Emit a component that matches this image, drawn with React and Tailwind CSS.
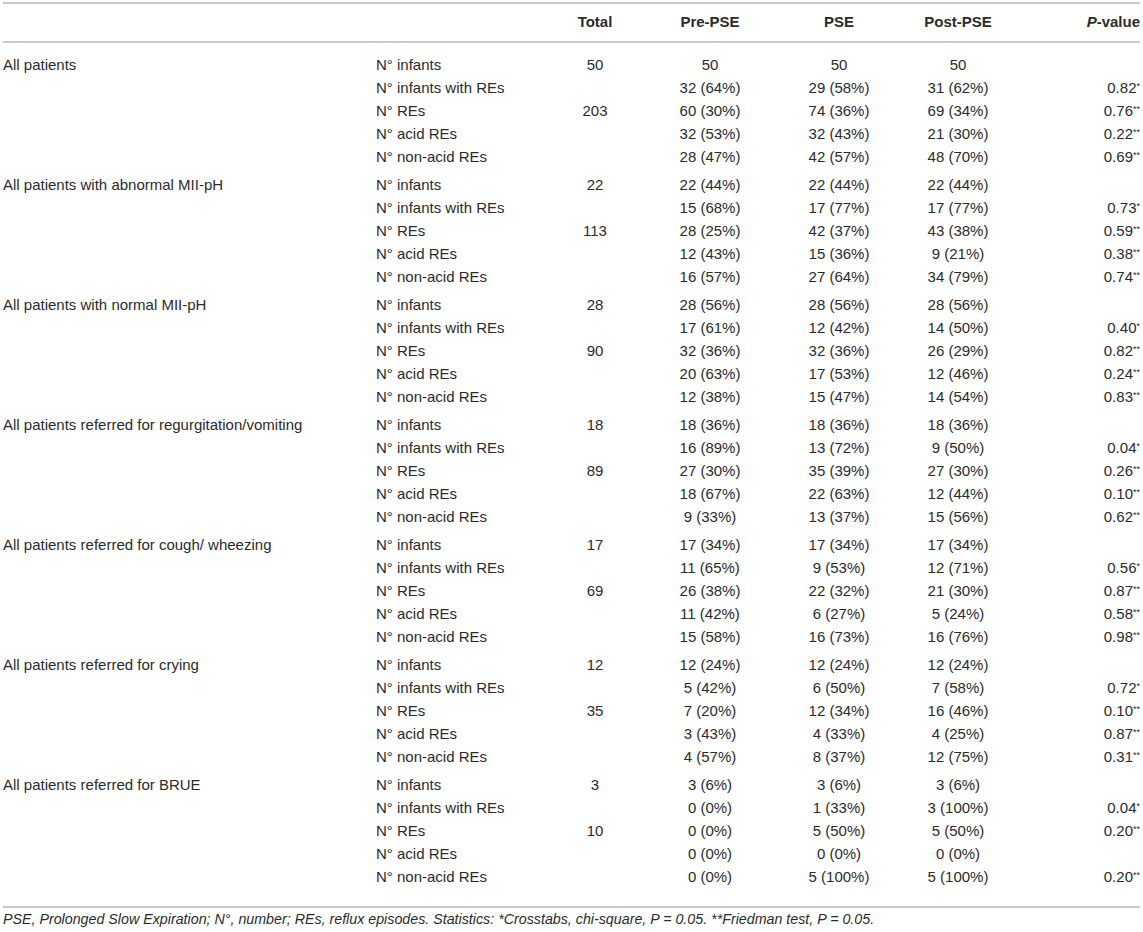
const groups = [
  {
    label: 'All patients',
    rows: [
      ['N° infants', '50', '50', '50', '50', ''],
      ['N° infants with REs', '', '32 (64%)', '29 (58%)', '31 (62%)', '0.82', '*'],
      ['N° REs', '203', '60 (30%)', '74 (36%)', '69 (34%)', '0.76', '**'],
      ['N° acid REs', '', '32 (53%)', '32 (43%)', '21 (30%)', '0.22', '**'],
      ['N° non-acid REs', '', '28 (47%)', '42 (57%)', '48 (70%)', '0.69', '**'],
    ],
  },
  {
    label: 'All patients with abnormal MII-pH',
    rows: [
      ['N° infants', '22', '22 (44%)', '22 (44%)', '22 (44%)', ''],
      ['N° infants with REs', '', '15 (68%)', '17 (77%)', '17 (77%)', '0.73', '*'],
      ['N° REs', '113', '28 (25%)', '42 (37%)', '43 (38%)', '0.59', '**'],
      ['N° acid REs', '', '12 (43%)', '15 (36%)', '9 (21%)', '0.38', '**'],
      ['N° non-acid REs', '', '16 (57%)', '27 (64%)', '34 (79%)', '0.74', '**'],
    ],
  },
  {
    label: 'All patients with normal MII-pH',
    rows: [
      ['N° infants', '28', '28 (56%)', '28 (56%)', '28 (56%)', ''],
      ['N° infants with REs', '', '17 (61%)', '12 (42%)', '14 (50%)', '0.40', '*'],
      ['N° REs', '90', '32 (36%)', '32 (36%)', '26 (29%)', '0.82', '**'],
      ['N° acid REs', '', '20 (63%)', '17 (53%)', '12 (46%)', '0.24', '**'],
      ['N° non-acid REs', '', '12 (38%)', '15 (47%)', '14 (54%)', '0.83', '**'],
    ],
  },
  {
    label: 'All patients referred for regurgitation/vomiting',
    rows: [
      ['N° infants', '18', '18 (36%)', '18 (36%)', '18 (36%)', ''],
      ['N° infants with REs', '', '16 (89%)', '13 (72%)', '9 (50%)', '0.04', '*'],
      ['N° REs', '89', '27 (30%)', '35 (39%)', '27 (30%)', '0.26', '**'],
      ['N° acid REs', '', '18 (67%)', '22 (63%)', '12 (44%)', '0.10', '**'],
      ['N° non-acid REs', '', '9 (33%)', '13 (37%)', '15 (56%)', '0.62', '**'],
    ],
  },
  {
    label: 'All patients referred for cough/ wheezing',
    rows: [
      ['N° infants', '17', '17 (34%)', '17 (34%)', '17 (34%)', ''],
      ['N° infants with REs', '', '11 (65%)', '9 (53%)', '12 (71%)', '0.56', '*'],
      ['N° REs', '69', '26 (38%)', '22 (32%)', '21 (30%)', '0.87', '**'],
      ['N° acid REs', '', '11 (42%)', '6 (27%)', '5 (24%)', '0.58', '**'],
      ['N° non-acid REs', '', '15 (58%)', '16 (73%)', '16 (76%)', '0.98', '**'],
    ],
  },
  {
    label: 'All patients referred for crying',
    rows: [
      ['N° infants', '12', '12 (24%)', '12 (24%)', '12 (24%)', ''],
      ['N° infants with REs', '', '5 (42%)', '6 (50%)', '7 (58%)', '0.72', '*'],
      ['N° REs', '35', '7 (20%)', '12 (34%)', '16 (46%)', '0.10', '**'],
      ['N° acid REs', '', '3 (43%)', '4 (33%)', '4 (25%)', '0.87', '**'],
      ['N° non-acid REs', '', '4 (57%)', '8 (37%)', '12 (75%)', '0.31', '**'],
    ],
  },
  {
    label: 'All patients referred for BRUE',
    rows: [
      ['N° infants', '3', '3 (6%)', '3 (6%)', '3 (6%)', ''],
      ['N° infants with REs', '', '0 (0%)', '1 (33%)', '3 (100%)', '0.04', '*'],
      ['N° REs', '10', '0 (0%)', '5 (50%)', '5 (50%)', '0.20', '**'],
      ['N° acid REs', '', '0 (0%)', '0 (0%)', '0 (0%)', ''],
      ['N° non-acid REs', '', '0 (0%)', '5 (100%)', '5 (100%)', '0.20', '**'],
    ],
  },
];

const cols = 'grid grid-cols-[372px_170px_100px_130px_128px_110px_1fr]';

export default function App() {
  return (
    <div className="min-h-[932px] w-[1143px] bg-white text-[#2b2b2b] [font-family:'Liberation_Sans',Arial,sans-serif]">
      <div className="ml-[3px] w-[1137px] pt-[2px]">
        <div className="border-t-2 border-[#c9c9c9]" />
        <div className={`${cols} h-[37px] items-center text-[15px] font-bold`}>
          <div />
          <div />
          <div className="text-center">Total</div>
          <div className="text-center">Pre-PSE</div>
          <div className="text-center">PSE</div>
          <div className="text-center">Post-PSE</div>
          <div className="text-right">
            <span className="italic">P</span>-value
          </div>
        </div>
        <div className="border-t-2 border-[#c9c9c9]" />
        <div className="flex flex-col gap-[5px] pt-[11px] pb-[17px] text-[15px]">
          {groups.map((g) => (
            <div key={g.label}>
              {g.rows.map((r, i) => (
                <div key={i} className={`${cols} h-[23px] items-center`}>
                  <div>{i === 0 ? g.label : ''}</div>
                  <div className="pl-[1px]">{r[0]}</div>
                  <div className="text-center">{r[1]}</div>
                  <div className="text-center">{r[2]}</div>
                  <div className="text-center">{r[3]}</div>
                  <div className="text-center">{r[4]}</div>
                  <div className="text-right">
                    {r[5]}
                    {r[6] && <sup className="text-[9px]">{r[6]}</sup>}
                  </div>
                </div>
              ))}
            </div>
          ))}
        </div>
        <div className="border-t-2 border-[#c9c9c9]" />
        <p className="pt-[1px] text-[14.25px] italic">
          PSE, Prolonged Slow Expiration; N°, number; REs, reflux episodes. Statistics: *Crosstabs, chi-square, P = 0.05. **Friedman test, P = 0.05.
        </p>
      </div>
    </div>
  );
}
